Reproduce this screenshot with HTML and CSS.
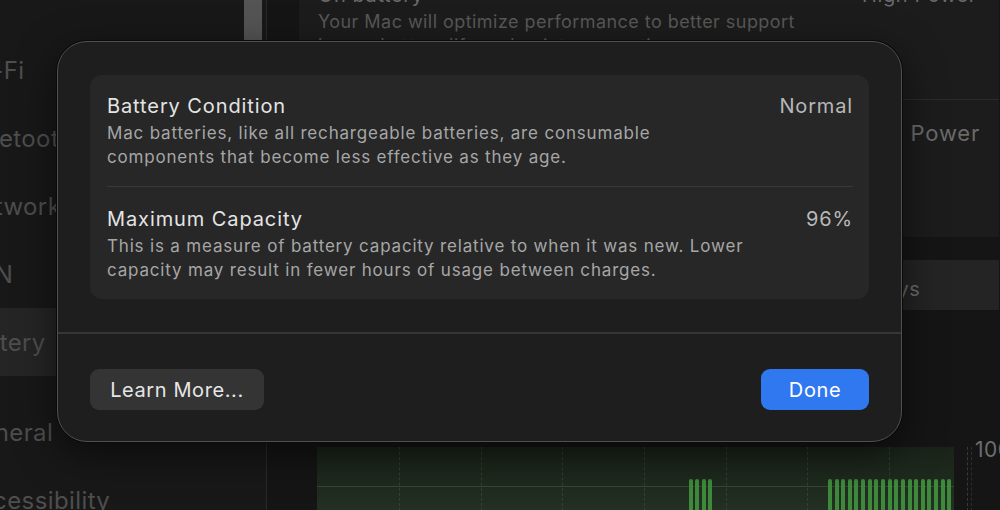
FILE: index.html
```html
<!DOCTYPE html>
<html lang="en">
<head>
<meta charset="utf-8">
<title>Battery</title>
<link rel="stylesheet" href="styles.css">
</head>
<body>
<div class="window">
  <aside class="sidebar">
    <div class="side-list">
      <div class="side-item"><span>Wi-Fi</span></div>
      <div class="side-item"><span>Bluetooth</span></div>
      <div class="side-item"><span>Network</span></div>
      <div class="side-item"><span>VPN</span></div>
      <div class="side-item selected"><span>Battery</span></div>
      <div class="side-item gap"><span>General</span></div>
      <div class="side-item"><span>Accessibility</span></div>
    </div>
    <div class="scroll-track"><div class="scroll-thumb"></div></div>
  </aside>
  <main class="main">
    <section class="group">
      <div class="group-row first">
        <div class="row-text">
          <div class="row-title">On battery</div>
          <div class="row-desc">Your Mac will optimize performance to better support<br>longer battery life and quieter operation.</div>
        </div>
        <div class="row-value">High Power</div>
      </div>
      <div class="group-row second">
        <div class="row-text">
          <div class="row-title">On power adapter</div>
        </div>
        <div class="row-value large">High Power</div>
      </div>
    </section>
    <div class="segmented">
      <div class="seg">Last 24 Hours</div>
      <div class="seg active">Last 10 Days</div>
    </div>
    <div class="chart">
      <div class="plot">
        <div class="vlines">
          <i></i><i></i><i></i><i></i><i></i><i></i><i></i><i></i>
        </div>
        <div class="hline"></div>
        <div class="bars">
<i></i><i></i><i></i><i></i><i></i><i></i><i></i><i></i><i></i><i></i><i></i><i></i><i></i><i></i><i></i><i></i><i></i><i></i><i></i><i></i><i></i><i></i><i></i><i></i><i></i><i></i><i></i><i></i><i></i><i></i><i></i><i></i><i></i><i></i><i></i><i></i><i></i><i></i><i></i><i></i><i></i><i></i><i></i><i></i><i></i><i></i><i></i><i></i><i></i><i></i><i></i><i></i><i></i><i></i><i></i><i></i><i class="on"></i><i class="on"></i><i class="on"></i><i class="on"></i><i></i><i></i><i></i><i></i><i></i><i></i><i></i><i></i><i></i><i></i><i></i><i></i><i></i><i></i><i></i><i></i><i></i><i class="on"></i><i class="on"></i><i class="on"></i><i class="on"></i><i class="on"></i><i class="on"></i><i class="on"></i><i class="on"></i><i class="on"></i><i class="on"></i><i class="on"></i><i class="on"></i><i class="on"></i><i class="on"></i><i class="on"></i><i class="on"></i><i class="on"></i><i class="on"></i><i class="on"></i>
        </div>
      </div>
      <div class="axis">
        <div class="axis-line"></div>
        <div class="axis-label">100%</div>
      </div>
    </div>
  </main>
</div>

<div class="sheet">
  <div class="sheet-body">
    <div class="card">
      <div class="info-row">
        <div class="info-text">
          <div class="info-title">Battery Condition</div>
          <div class="info-desc">Mac batteries, like all rechargeable batteries, are consumable<br>components that become less effective as they age.</div>
        </div>
        <div class="info-value">Normal</div>
      </div>
      <div class="info-row">
        <div class="info-text">
          <div class="info-title">Maximum Capacity</div>
          <div class="info-desc">This is a measure of battery capacity relative to when it was new. Lower<br>capacity may result in fewer hours of usage between charges.</div>
        </div>
        <div class="info-value">96%</div>
      </div>
    </div>
  </div>
  <div class="sheet-footer">
    <button class="btn btn-secondary">Learn More...</button>
    <button class="btn btn-primary">Done</button>
  </div>
</div>
</body>
</html>
```
FILE: styles.css
```css
* { box-sizing: border-box; }
html, body {
  margin: 0;
  padding: 0;
  width: 1000px;
  height: 510px;
  overflow: hidden;
  background: #151515;
  font-family: Inter, "Open Sans", "Liberation Sans", sans-serif;
  -webkit-font-smoothing: antialiased;
}

.window {
  display: flex;
  width: 1000px;
  height: 510px;
}

/* Sidebar */
.sidebar {
  width: 267px;
  flex: none;
  display: flex;
  background: #181818;
  border-right: 1px solid #2a2a2a;
}
.side-list {
  flex: 1;
  padding-top: 36px;
  display: flex;
  flex-direction: column;
  overflow: hidden;
}
.side-item {
  height: 68px;
  flex: none;
  display: flex;
  align-items: center;
  font-size: 24px;
  letter-spacing: 0.4px;
  color: #4e4e4e;
  white-space: nowrap;
}
.side-item span { margin-left: -38px; }
.side-item.selected {
  background: #252525;
  margin-right: -4px;
}
.side-item.gap { margin-top: 22px; }
.scroll-track {
  width: 22px;
  flex: none;
  padding: 0 4px 0 0;
}
.scroll-thumb {
  width: 18px;
  height: 40px;
  background: #545454;
}

/* Main */
.main {
  flex: 1;
  display: flex;
  flex-direction: column;
  padding-left: 32px;
  background: #151515;
  overflow: hidden;
  min-width: 0;
}
.group {
  margin-top: -36px;
  background: #1c1c1c;
  border-radius: 10px 0 0 10px;
  width: 700px;
  flex: none;
}
.group-row {
  display: flex;
  justify-content: space-between;
  padding: 18px 22px 0 19px;
}
.group-row.first {
  height: 136px;
  border-bottom: 1px solid #2b2b2b;
}
.group-row.second {
  height: 137px;
  padding-top: 19px;
  padding-right: 19px;
}
.row-title {
  font-size: 20px;
  line-height: 26px;
  letter-spacing: 0.6px;
  color: #6a6a6a;
}
.row-desc {
  font-size: 18px;
  line-height: 24px;
  letter-spacing: 0.45px;
  color: #585858;
  margin-top: 2px;
}
.row-value {
  font-size: 20px;
  line-height: 26px;
  letter-spacing: 0.6px;
  color: #6a6a6a;
}
.row-value.large {
  font-size: 22px;
  line-height: 28px;
  letter-spacing: 0.8px;
}

.segmented {
  margin-top: 23px;
  height: 50px;
  display: flex;
  background: #242424;
  width: 700px;
  flex: none;
}
.seg {
  flex: 1;
  display: flex;
  align-items: center;
  justify-content: center;
  font-size: 20px;
  letter-spacing: 0.6px;
  color: #6a6a6a;
  padding-top: 8px;
}
.seg.active { padding-left: 134px; }

.chart {
  margin-top: 137px;
  margin-left: 18px;
  display: flex;
  height: 120px;
  flex: none;
}
.plot {
  position: relative;
  width: 637px;
  flex: none;
  height: 120px;
  background: linear-gradient(180deg, #1a2319 0%, #243224 60%, #28382a 100%);
}
.vlines {
  position: absolute;
  inset: 0;
  display: flex;
  padding-left: 82px;
  gap: 0;
}
.vlines i {
  width: 81.7px;
  flex: none;
  border-left: 1px dashed rgba(120, 140, 120, 0.22);
}
.hline {
  position: absolute;
  left: 0;
  right: 0;
  top: 39px;
  border-top: 1px solid rgba(120, 150, 120, 0.25);
}
.bars {
  position: absolute;
  inset: 32px 0 0 0;
  display: grid;
  grid-template-columns: repeat(96, 1fr);
}
.bars i { display: block; }
.bars i.on {
  width: 4px;
  background: #3e8a3b;
  border-radius: 2px 2px 0 0;
}
.axis {
  display: flex;
  width: 80px;
  flex: none;
}
.axis-line {
  margin-left: 13px;
  width: 0;
  border-left: 1px dashed #3a3a3a;
}
.axis-label {
  margin-left: 7px;
  margin-top: -10px;
  font-size: 21px;
  letter-spacing: 0.5px;
  color: #6d6d6d;
}

/* Sheet */
.sheet {
  position: absolute;
  left: 57px;
  top: 41px;
  width: 845px;
  height: 401px;
  background: #1e1e1e;
  border: 1px solid #505050;
  border-radius: 30px;
  box-shadow: 0 0 0 1px #0a0a0a, 0 12px 40px rgba(0, 0, 0, 0.55);
  display: flex;
  flex-direction: column;
}
.sheet-body {
  padding: 33px 32px 33px 32px;
  border-bottom: 2px solid #363636;
}
.card {
  background: #272727;
  border-radius: 12px;
  padding: 0 16px 0 17px;
}
.info-row {
  display: flex;
  justify-content: space-between;
  padding: 18px 0 17px 0;
}
.info-row + .info-row {
  border-top: 1px solid #383838;
  padding-top: 19px;
}
.info-title {
  font-size: 20px;
  line-height: 26px;
  letter-spacing: 0.9px;
  color: #e4e4e4;
}
.info-desc {
  margin-top: 2px;
  font-size: 17px;
  line-height: 24px;
  letter-spacing: 0.82px;
  color: #a6a6a6;
}
.info-value {
  font-size: 20px;
  line-height: 26px;
  letter-spacing: 0.85px;
  color: #b8b8b8;
}
.sheet-footer {
  display: flex;
  justify-content: space-between;
  padding: 35px 32px 0 32px;
}
.btn {
  height: 41px;
  border: none;
  border-radius: 9px;
  font-family: Inter, "Open Sans", "Liberation Sans", sans-serif;
  font-size: 20px;
  letter-spacing: 0.6px;
  padding: 0;
}
.btn-secondary {
  width: 174px;
  background: #343434;
  color: #e6e6e6;
}
.btn-primary {
  width: 108px;
  background: #3078f0;
  color: #ffffff;
}
```
